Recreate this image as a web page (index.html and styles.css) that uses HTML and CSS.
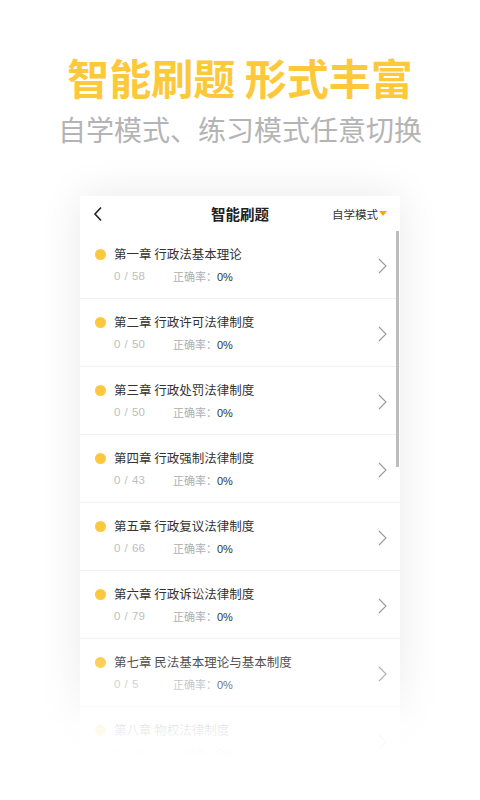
FILE: index.html
```html
<!DOCTYPE html>
<html lang="zh">
<head>
    <meta charset="UTF-8">
    <title>智能刷题</title>
    <meta name="viewport" content="width=device-width, initial-scale=1.0">
    <link rel="stylesheet" href="styles.css">
</head>
<body>
    <div class="page">
        <div class="hero">
            <h1 class="hero-title">智能刷题 形式丰富</h1>
            <p class="hero-sub">自学模式、练习模式任意切换</p>
        </div>
        <div class="phone">
            <div class="topbar">
                <svg class="back" width="10" height="16" viewBox="0 0 10 16"><path d="M8 1.5 L2 8 L8 14.5" fill="none" stroke="#222" stroke-width="1.6"/></svg>
                <div class="topbar-title">智能刷题</div>
                <div class="mode">自学模式<span class="tri"></span></div>
            </div>
            <div class="list">
                <div class="row">
                    <div class="row-main">
                        <div class="row-title"><span class="dot"></span>第一章 行政法基本理论</div>
                        <div class="row-meta"><span class="count">0 / 58</span><span class="rate">正确率：<b>0%</b></span></div>
                    </div>
                    <svg class="chev" width="9" height="16" viewBox="0 0 9 16"><path d="M1 1 L8 8 L1 15" fill="none" stroke="#999" stroke-width="1.1"/></svg>
                </div>
                <div class="row">
                    <div class="row-main">
                        <div class="row-title"><span class="dot"></span>第二章 行政许可法律制度</div>
                        <div class="row-meta"><span class="count">0 / 50</span><span class="rate">正确率：<b>0%</b></span></div>
                    </div>
                    <svg class="chev" width="9" height="16" viewBox="0 0 9 16"><path d="M1 1 L8 8 L1 15" fill="none" stroke="#999" stroke-width="1.1"/></svg>
                </div>
                <div class="row">
                    <div class="row-main">
                        <div class="row-title"><span class="dot"></span>第三章 行政处罚法律制度</div>
                        <div class="row-meta"><span class="count">0 / 50</span><span class="rate">正确率：<b>0%</b></span></div>
                    </div>
                    <svg class="chev" width="9" height="16" viewBox="0 0 9 16"><path d="M1 1 L8 8 L1 15" fill="none" stroke="#999" stroke-width="1.1"/></svg>
                </div>
                <div class="row">
                    <div class="row-main">
                        <div class="row-title"><span class="dot"></span>第四章 行政强制法律制度</div>
                        <div class="row-meta"><span class="count">0 / 43</span><span class="rate">正确率：<b>0%</b></span></div>
                    </div>
                    <svg class="chev" width="9" height="16" viewBox="0 0 9 16"><path d="M1 1 L8 8 L1 15" fill="none" stroke="#999" stroke-width="1.1"/></svg>
                </div>
                <div class="row">
                    <div class="row-main">
                        <div class="row-title"><span class="dot"></span>第五章 行政复议法律制度</div>
                        <div class="row-meta"><span class="count">0 / 66</span><span class="rate">正确率：<b>0%</b></span></div>
                    </div>
                    <svg class="chev" width="9" height="16" viewBox="0 0 9 16"><path d="M1 1 L8 8 L1 15" fill="none" stroke="#999" stroke-width="1.1"/></svg>
                </div>
                <div class="row">
                    <div class="row-main">
                        <div class="row-title"><span class="dot"></span>第六章 行政诉讼法律制度</div>
                        <div class="row-meta"><span class="count">0 / 79</span><span class="rate">正确率：<b>0%</b></span></div>
                    </div>
                    <svg class="chev" width="9" height="16" viewBox="0 0 9 16"><path d="M1 1 L8 8 L1 15" fill="none" stroke="#999" stroke-width="1.1"/></svg>
                </div>
                <div class="row">
                    <div class="row-main">
                        <div class="row-title"><span class="dot"></span>第七章 民法基本理论与基本制度</div>
                        <div class="row-meta"><span class="count">0 / 5</span><span class="rate">正确率：<b>0%</b></span></div>
                    </div>
                    <svg class="chev" width="9" height="16" viewBox="0 0 9 16"><path d="M1 1 L8 8 L1 15" fill="none" stroke="#999" stroke-width="1.1"/></svg>
                </div>
                <div class="row">
                    <div class="row-main">
                        <div class="row-title"><span class="dot"></span>第八章 物权法律制度</div>
                        <div class="row-meta"><span class="count">0 / 49</span><span class="rate">正确率：<b>0%</b></span></div>
                    </div>
                    <svg class="chev" width="9" height="16" viewBox="0 0 9 16"><path d="M1 1 L8 8 L1 15" fill="none" stroke="#999" stroke-width="1.1"/></svg>
                </div>
            </div>
            <div class="scrollbar"></div>
        </div>
        <div class="fade"></div>
    </div>
</body>
</html>
```

FILE: styles.css
```css
body {
    margin: 0;
    background: #fff;
    font-family: "Noto Sans CJK SC", "Noto Sans", sans-serif;
    overflow: hidden;
}
.page {
    position: relative;
    width: 480px;
    height: 800px;
    overflow: hidden;
    display: flex;
    flex-direction: column;
    align-items: center;
}
.hero {
    text-align: center;
    padding-top: 51px;
}
.hero-title {
    margin: 0;
    font-size: 42px;
    line-height: 52px;
    font-weight: 700;
    color: #fdc93b;
}
.hero-sub {
    margin: 6px 0 0 0;
    font-size: 28px;
    line-height: 40px;
    color: #b4b4b4;
    font-weight: 400;
}
.phone {
    position: relative;
    margin-top: 47px;
    width: 320px;
    flex: 1;
    background: #fff;
    box-shadow: 0 0 40px rgba(0,0,0,0.09);
}
.topbar {
    height: 35px;
    display: flex;
    align-items: center;
    position: relative;
    padding: 0 13px;
}
.topbar-title {
    position: absolute;
    left: 0;
    right: 0;
    text-align: center;
    font-size: 14.5px;
    font-weight: 700;
    color: #222;
    pointer-events: none;
}
.mode {
    margin-left: auto;
    font-size: 11.5px;
    color: #333;
    display: flex;
    align-items: center;
}
.tri {
    display: inline-block;
    width: 0;
    height: 0;
    border-left: 4px solid transparent;
    border-right: 4px solid transparent;
    border-top: 5px solid #f5a800;
    margin-left: 1px;
}
.list {
    display: flex;
    flex-direction: column;
}
.row {
    height: 68px;
    box-sizing: border-box;
    border-bottom: 1px solid #f1f1f1;
    display: flex;
    align-items: center;
    padding: 0 13px 0 15px;
}
.row-main {
    flex: 1;
}
.row-title {
    display: flex;
    align-items: center;
    font-size: 12.5px;
    color: #333;
    line-height: 18px;
}
.dot {
    width: 11px;
    height: 11px;
    border-radius: 50%;
    background: #fdc83d;
    margin-right: 8px;
}
.row-meta {
    margin-top: 6px;
    padding-left: 19px;
    font-family: "Liberation Sans", "Noto Sans CJK SC", sans-serif;
    font-size: 11.5px;
    line-height: 14px;
    color: #bdbdbd;
    display: flex;
}
.count {
    width: 59px;
    word-spacing: 1px;
}
.rate {
    font-family: "Noto Sans CJK SC", sans-serif;
    font-size: 11px;
    color: #b0b0b0;
}
.rate b {
    font-family: "Liberation Sans", sans-serif;
    font-weight: 400;
    color: #333;
}
.chev {
    margin-top: 2px;
}
.scrollbar {
    position: absolute;
    right: 1px;
    top: 35px;
    width: 3px;
    height: 236px;
    background: #bdbdbd;
}
.fade {
    position: absolute;
    left: 0;
    right: 0;
    bottom: 0;
    height: 160px;
    background: linear-gradient(to bottom, rgba(255,255,255,0) 0%, rgba(255,255,255,0.25) 25%, rgba(255,255,255,0.9) 55%, #fff 75%);
    pointer-events: none;
}
```
